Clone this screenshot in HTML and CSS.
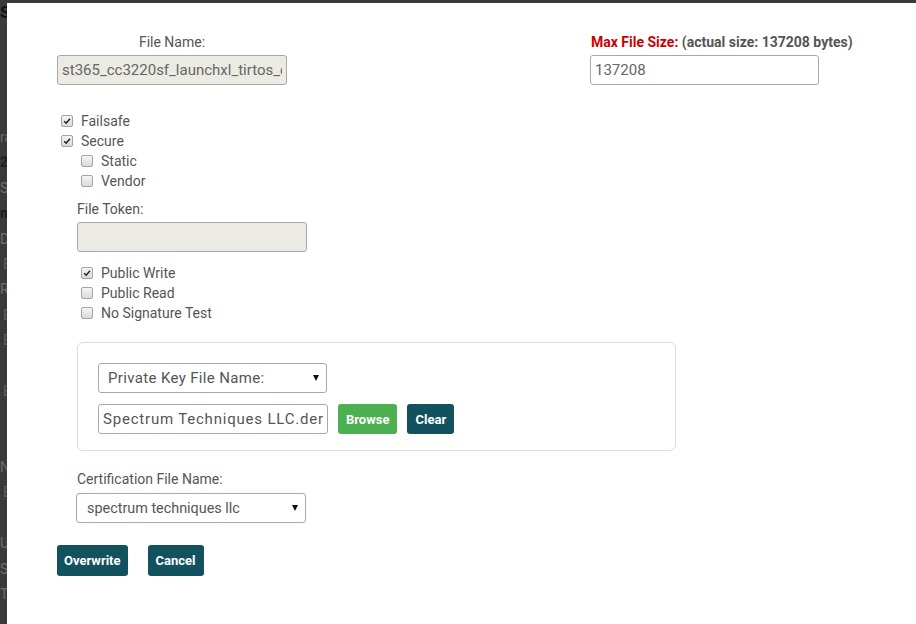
FILE: index.html
```html
<!DOCTYPE html>
<html lang="en">
  <head>
    <meta charset="UTF-8" />
    <title>Overwrite File</title>
    <link rel="stylesheet" href="styles.css">
  </head>
  <body>
    <!-- page behind the dialog, only a sliver shows -->
    <div class="page">
      <div class="head">S</div>
      <div class="line">ra</div>
      <div class="line b">2</div>
      <div class="line">Se</div>
      <div class="line b">m</div>
      <div class="line">De</div>
      <div class="line in">E</div>
      <div class="line">Ro</div>
      <div class="line in">E</div>
      <div class="line in">E</div>
      <div class="line"></div>
      <div class="line in">E</div>
      <div class="line"></div>
      <div class="line"></div>
      <div class="line">Ne</div>
      <div class="line in">E</div>
      <div class="line"></div>
      <div class="line">Us</div>
      <div class="line">Se</div>
      <div class="line">Tr</div>
    </div>

    <div class="modal">
      <div class="top_row">
        <div class="field name_field">
          <label class="label center">File Name:</label>
          <input class="input disabled" readonly value="st365_cc3220sf_launchxl_tirtos_cc.bin" />
        </div>
        <div class="field">
          <label class="label bold"><span class="red">Max File Size:</span> (actual size: 137208 bytes)</label>
          <input class="input" value="137208" />
        </div>
      </div>

      <div class="checks first">
        <label class="check"><span class="box"><svg viewBox="0 0 12 12"><path d="M2.6 6.2 L5 8.6 L9.6 3.2" /></svg></span>Failsafe</label>
        <label class="check"><span class="box"><svg viewBox="0 0 12 12"><path d="M2.6 6.2 L5 8.6 L9.6 3.2" /></svg></span>Secure</label>
        <div class="sub">
          <label class="check"><span class="box"></span>Static</label>
          <label class="check"><span class="box"></span>Vendor</label>
        </div>
      </div>

      <div class="sub_block">
        <label class="label token_label">File Token:</label>
        <input class="input disabled" readonly value="" />

        <div class="checks public">
          <label class="check"><span class="box"><svg viewBox="0 0 12 12"><path d="M2.6 6.2 L5 8.6 L9.6 3.2" /></svg></span>Public Write</label>
          <label class="check"><span class="box"></span>Public Read</label>
          <label class="check"><span class="box"></span>No Signature Test</label>
        </div>

        <div class="key_box">
          <div class="select_wrap">
            <select class="select key_select">
              <option>Private Key File Name:</option>
            </select>
          </div>
          <div class="file_row">
            <input class="input key_file" value="Spectrum Techniques LLC.der" />
            <button class="btn green">Browse</button>
            <button class="btn">Clear</button>
          </div>
        </div>

        <label class="label cert_label">Certification File Name:</label>
        <div class="select_wrap cert">
          <select class="select">
            <option>spectrum techniques llc</option>
          </select>
        </div>
      </div>

      <div class="actions">
        <button class="btn">Overwrite</button>
        <button class="btn cancel">Cancel</button>
      </div>
    </div>
  </body>
</html>
```

FILE: styles.css
```css
html,
body {
  margin: 0;
  padding: 0;
  width: 100%;
  height: 100%;
  overflow: hidden;
}

body {
  background: #3a3a3a;
  font-family: Roboto, "Liberation Sans", Arial, sans-serif;
  font-size: 14px;
  color: #555;
}

/* background page */
.page {
  padding-top: 2px;
  font-size: 14px;
  color: #6e6e6e;
}
.page .head {
  height: 123px;
  font-size: 17px;
  font-weight: bold;
  color: #111;
  line-height: 20px;
}
.page .line {
  height: 25.4px;
  line-height: 25.4px;
  white-space: nowrap;
}
.page .b {
  font-weight: bold;
  color: #1e1e1e;
}
.page .in {
  padding-left: 3px;
  color: #606060;
}

/* dialog */
.modal {
  position: absolute;
  top: 3px;
  left: 7px;
  right: 0;
  bottom: 0;
  background: #fff;
  padding: 30px 0 0 50px;
  box-sizing: border-box;
}

.top_row {
  display: flex;
  gap: 303px;
}
.field {
  width: 230px;
}
.name_field .input {
  width: 230px;
}

.label {
  display: block;
  line-height: 18px;
  margin-bottom: 4px;
  white-space: nowrap;
  font-size: 14px;
}
.label.center {
  text-align: center;
}
.label.bold {
  font-weight: bold;
  padding-left: 1px;
}
.red {
  color: #cc0000;
}

.input {
  box-sizing: border-box;
  width: 229px;
  height: 30px;
  padding: 0 4px;
  border: 1px solid #a9a9a9;
  border-radius: 3px;
  font-family: Roboto, "Liberation Sans", Arial, sans-serif;
  font-size: 15px;
  color: #666;
  background: #fff;
  outline: none;
  display: block;
}
.input.disabled {
  width: 230px;
  background: #ebebe4;
}

.checks.first {
  margin-top: 26px;
}
.check {
  display: flex;
  align-items: center;
  height: 20px;
  font-size: 14px;
  color: #555;
}
.box {
  box-sizing: border-box;
  width: 12px;
  height: 12px;
  margin: 0 8px 0 4px;
  border: 1px solid #a3a3a3;
  border-radius: 2px;
  background: linear-gradient(#f5f5f5, #dadada);
  display: flex;
}
.box svg {
  width: 10px;
  height: 10px;
}
.box path {
  fill: none;
  stroke: #222;
  stroke-width: 1.8;
}
.sub {
  padding-left: 20px;
}

.sub_block {
  padding-left: 20px;
}
.token_label {
  margin-top: 9px;
}
.checks.public {
  margin-top: 11px;
}

.key_box {
  box-sizing: border-box;
  width: 599px;
  margin-top: 19px;
  padding: 20px 20px 16px;
  border: 1px solid #ddd;
  border-radius: 6px;
}

.select_wrap {
  position: relative;
  width: 229px;
}
.select_wrap::after {
  content: "";
  position: absolute;
  right: 8px;
  top: 12px;
  border-left: 3.5px solid transparent;
  border-right: 3.5px solid transparent;
  border-top: 6px solid #111;
  pointer-events: none;
}
.select {
  -webkit-appearance: none;
  appearance: none;
  box-sizing: border-box;
  width: 100%;
  height: 30px;
  padding: 0 9px;
  border: 1px solid #a9a9a9;
  border-radius: 3px;
  background: #fff;
  font-family: Roboto, "Liberation Sans", Arial, sans-serif;
  font-size: 14.4px;
  color: #555;
  outline: none;
}
.select.key_select {
  font-size: 15px;
  letter-spacing: 0.35px;
}

.file_row {
  display: flex;
  gap: 10px;
  margin-top: 11px;
}
.file_row .input {
  width: 230px;
}
.input.key_file {
  font-size: 15px;
  letter-spacing: 0.8px;
  color: #555;
}

.btn {
  height: 30px;
  padding: 0 8px;
  border: 0;
  border-radius: 3px;
  background: #12525f;
  color: #fff;
  font-family: Roboto, "Liberation Sans", Arial, sans-serif;
  font-size: 13px;
  font-weight: bold;
  cursor: pointer;
}
.btn.green {
  background: #4caf50;
}

.cert_label {
  margin-top: 19px;
  margin-bottom: 5px;
}
.select_wrap.cert {
  width: 230px;
  margin-left: -1px;
}
.select_wrap.cert .select {
  padding-left: 10px;
}

.actions {
  display: flex;
  gap: 20px;
  margin-top: 22px;
}
.actions .btn {
  height: 31px;
  padding: 0 7px;
}
.actions .btn.cancel {
  padding: 0 8px;
}
```
